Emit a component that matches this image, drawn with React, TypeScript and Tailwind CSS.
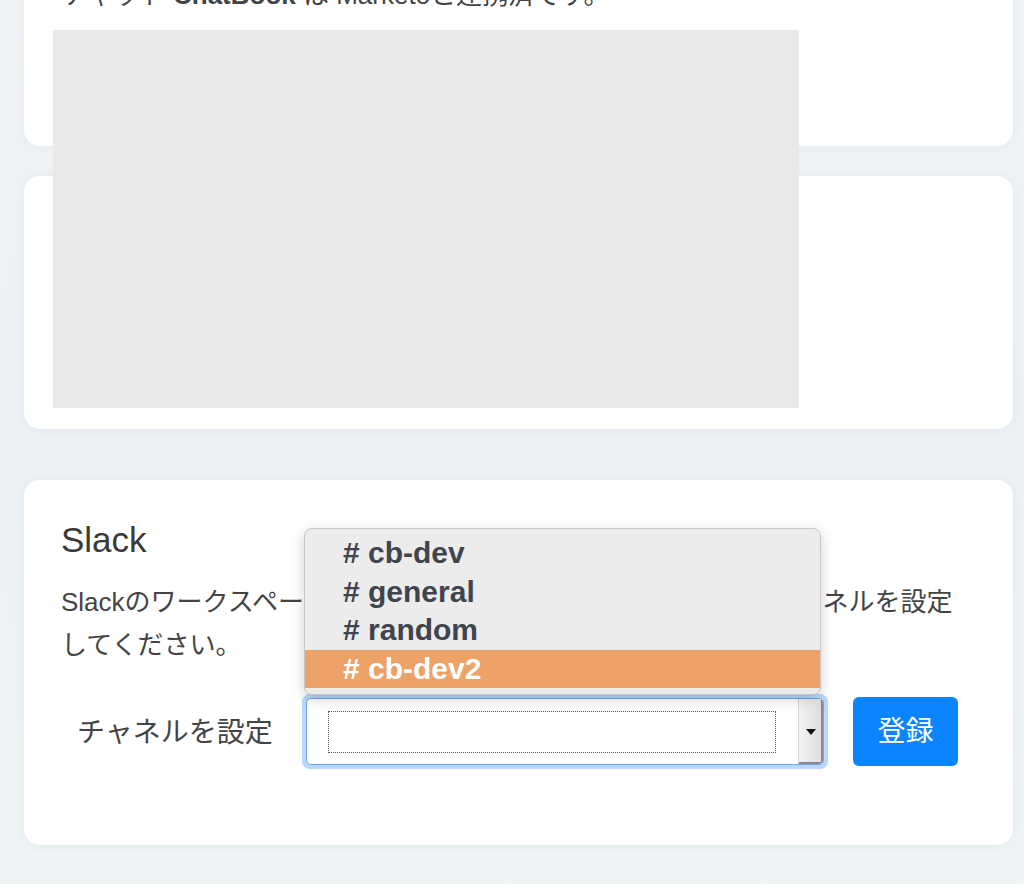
import React from "react";

const font = { fontFamily: '"Liberation Sans", "Noto Sans CJK JP", sans-serif' };

const channels = ["cb-dev", "general", "random", "cb-dev2"];

function ChannelMenu({ active }: { active: string }) {
  return (
    <div className="absolute bottom-[calc(100%-1px)] left-[2px] w-[517px] rounded-[8px] border border-[#c6c6c6] bg-[#ececec] pb-[6px] pt-[5px] shadow-[0_4px_14px_rgba(0,0,0,0.18)]">
      {channels.map((c) => (
        <div
          key={c}
          className={`flex h-[38.5px] items-center pl-[38px] text-[30px] font-bold leading-none ${
            c === active ? "bg-[#eda268] text-white" : "text-[#40454d]"
          }`}
        >
          # {c}
        </div>
      ))}
    </div>
  );
}

export default function App() {
  return (
    <div
      className="relative h-[884px] overflow-hidden bg-gradient-to-b from-[#f1f4f6] via-[#edf1f4] to-[#eff4f5] text-[#333]"
      style={font}
    >
      <div className="-mt-[60px] flex flex-col pl-[24px] pr-[11px]">
        {/* Marketo card, mostly scrolled away */}
        <div className="h-[206px] rounded-[16px] bg-white px-[38px] pt-[34px] shadow-[0_0_12px_rgba(180,195,210,0.18)]">
          <p className="text-[26px] leading-[42px] text-[#444]">
            チャット <span className="font-bold">ChatBook</span> は Marketoと連携済です。
          </p>
        </div>

        <div className="mt-[30px] h-[253px] rounded-[16px] bg-white shadow-[0_0_12px_rgba(180,195,210,0.18)]" />

        {/* Slack card */}
        <div className="mt-[51px] h-[365px] rounded-[16px] bg-white px-[37px] pt-[36px] shadow-[0_0_12px_rgba(180,195,210,0.18)]">
          <h2 className="text-[35px] font-medium leading-[48px] text-[#3a3a3a]">Slack</h2>
          <p className="mt-[17px] text-[26px] leading-[43px] text-[#444]">
            Slackのワークスペースと連携しました。通知を送信する先のチャネルを設定
            <br />
            してください。
          </p>
          <div className="mt-[27px] flex items-center">
            <label className="w-[241px] pl-[16px] pt-[3px] text-[28px] text-[#444]">チャネルを設定</label>
            <div className="relative">
              <ChannelMenu active="cb-dev2" />
              <div className="rounded-[8px] bg-[#b9d8fb] p-[4px]">
                <div className="flex h-[67px] w-[518px] items-stretch overflow-hidden rounded-[5px] border border-[#6fa4e6] bg-white">
                  <div className="flex flex-1 items-center pl-[21px] pr-[22px]">
                    <div className="h-[42px] w-full border border-dotted border-[#555]" />
                  </div>
                  <div className="flex w-[25px] items-center justify-center border-l border-[#d0d0d0] bg-gradient-to-r from-[#f4f4f4] to-[#dcdcdc] shadow-[inset_-2px_-2px_0_#8a8a8a]">
                    <svg width="10" height="6" viewBox="0 0 10 6">
                      <path d="M0 0h10L5 6z" fill="#111" />
                    </svg>
                  </div>
                </div>
              </div>
            </div>
            <button className="ml-[25px] flex h-[69px] w-[105px] items-center justify-center rounded-[6px] bg-[#0a84ff] text-[28px] text-white">
              登録
            </button>
          </div>
        </div>
      </div>

      {/* loading placeholder floating over the cards */}
      <div className="absolute left-[53px] top-[30px] h-[378px] w-[746px] bg-[#e9e9e9]" />
    </div>
  );
}
